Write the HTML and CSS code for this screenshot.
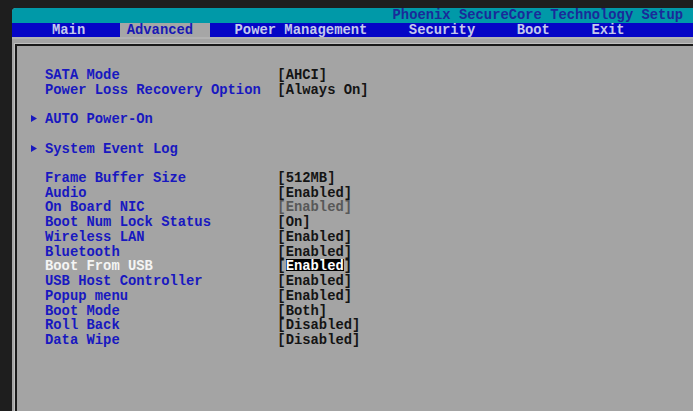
FILE: index.html
```html
<!DOCTYPE html>
<html>
<head>
<meta charset="utf-8">
<link rel="stylesheet" href="styles.css">
</head>
<body>
<div class="screen">
  <div class="titlebar">Phoenix SecureCore Technology Setup</div>
  <nav class="menubar">
    <span class="tab">Main</span>
    <span class="tab active">Advanced</span>
    <span class="tab">Power Management</span>
    <span class="tab">Security</span>
    <span class="tab">Boot</span>
    <span class="tab">Exit</span>
  </nav>
  <div class="content">
    <div class="frame">
      <div class="row"><span class="mark"></span><span class="label">SATA Mode</span><span class="value">[AHCI]</span></div>
      <div class="row"><span class="mark"></span><span class="label">Power Loss Recovery Option</span><span class="value">[Always On]</span></div>
      <div class="row"></div>
      <div class="row"><span class="mark"><svg class="arrow" width="6" height="7" viewBox="0 0 6 7"><polygon points="0,0 6,3.5 0,7" fill="#1818c0"/></svg></span><span class="label">AUTO Power-On</span></div>
      <div class="row"></div>
      <div class="row"><span class="mark"><svg class="arrow" width="6" height="7" viewBox="0 0 6 7"><polygon points="0,0 6,3.5 0,7" fill="#1818c0"/></svg></span><span class="label">System Event Log</span></div>
      <div class="row"></div>
      <div class="row"><span class="mark"></span><span class="label">Frame Buffer Size</span><span class="value">[512MB]</span></div>
      <div class="row"><span class="mark"></span><span class="label">Audio</span><span class="value">[Enabled]</span></div>
      <div class="row"><span class="mark"></span><span class="label">On Board NIC</span><span class="value disabled">[Enabled]</span></div>
      <div class="row"><span class="mark"></span><span class="label">Boot Num Lock Status</span><span class="value">[On]</span></div>
      <div class="row"><span class="mark"></span><span class="label">Wireless LAN</span><span class="value">[Enabled]</span></div>
      <div class="row"><span class="mark"></span><span class="label">Bluetooth</span><span class="value">[Enabled]</span></div>
      <div class="row selected"><span class="mark"></span><span class="label">Boot From USB</span><span class="value">[<span class="hl">Enabled</span>]</span></div>
      <div class="row"><span class="mark"></span><span class="label">USB Host Controller</span><span class="value">[Enabled]</span></div>
      <div class="row"><span class="mark"></span><span class="label">Popup menu</span><span class="value">[Enabled]</span></div>
      <div class="row"><span class="mark"></span><span class="label">Boot Mode</span><span class="value">[Both]</span></div>
      <div class="row"><span class="mark"></span><span class="label">Roll Back</span><span class="value">[Disabled]</span></div>
      <div class="row"><span class="mark"></span><span class="label">Data Wipe</span><span class="value">[Disabled]</span></div>
    </div>
  </div>
</div>
</body>
</html>
```
FILE: styles.css
```css
html, body {
  margin: 0;
  padding: 0;
  background: #1e1e1e;
  overflow: hidden;
  width: 693px;
  height: 411px;
}
body {
  padding: 8px 0 0 12px;
  box-sizing: border-box;
  font-family: "Liberation Mono", "DejaVu Sans Mono", monospace;
  font-weight: bold;
  font-size: 13.83px;
}
.screen {
  width: 690px;
  height: 420px;
  background: #a4a4a4;
  border-top-left-radius: 4px;
  overflow: hidden;
  display: flex;
  flex-direction: column;
}
.titlebar {
  height: 15px;
  line-height: 15px;
  background: #0099a8;
  color: #1a2a9a;
  text-align: right;
  padding-right: 19px;
  white-space: pre;
}
.menubar {
  height: 14px;
  line-height: 14px;
  background: #0505c6;
  color: #c4c8ec;
  display: flex;
  gap: 5ch;
  padding-left: 40px;
  white-space: pre;
}
.tab {
  display: block;
}
.tab.active {
  background: #a6a6a6;
  color: #1818b4;
  padding: 0 17px 0 7px;
  margin: 0 -17px 0 -7px;
}
.content {
  flex: 1;
  display: flex;
  flex-direction: column;
  border-top: 2px solid #b2b2b2;
  padding: 5px 0 0 3px;
}
.frame {
  flex: 1;
  border-left: 2px solid #1a1a1a;
  border-top: 2px solid #1a1a1a;
  box-shadow: -1px -1px 0 #c0c0c0;
  padding: 22px 0 0 14px;
}
.row {
  display: flex;
  height: 14.73px;
  line-height: 14.73px;
  white-space: pre;
}
.mark {
  width: 14px;
  flex: none;
}
.arrow {
  vertical-align: 1px;
}
.label {
  width: 28ch;
  flex: none;
  color: #1818c0;
}
.value {
  color: #141414;
}
.value.disabled {
  color: #585858;
}
.selected .label {
  color: #f4f4f4;
}
.hl {
  display: inline-block;
  height: 12px;
  line-height: 15px;
  background: #000;
  color: #fff;
  vertical-align: baseline;
}
```
